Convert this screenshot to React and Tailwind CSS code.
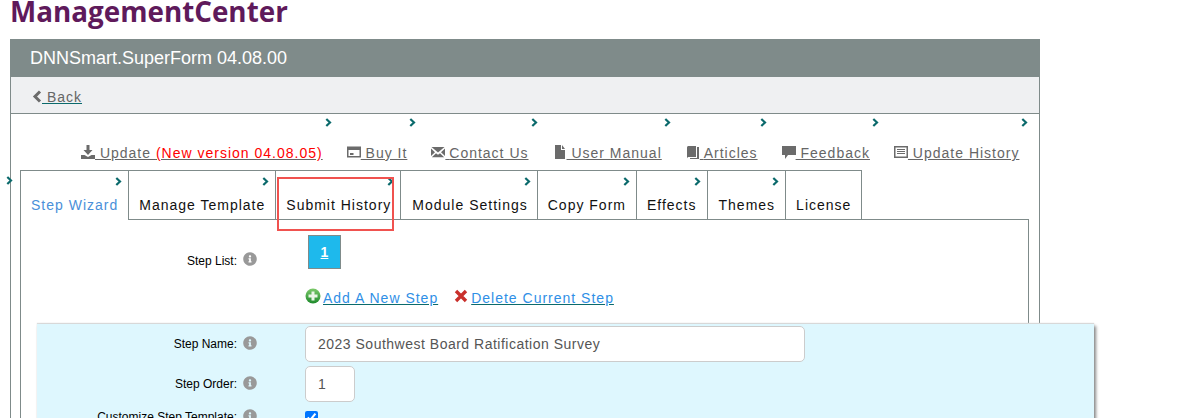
import { FaInfoCircle } from 'react-icons/fa';

// bootstrap style glyphs, all on a 14x14 box
const GLYPHS = {
  download: 'M5.5 0h3v5h3L7 10 2.5 5h3zM0 10h3.5L7 12l3.5-2H14v4H0z',
  card: 'M0 1.5h14v11H0zM1.5 5v6h11V5zM3 8h3.5v2H3z',
  envelope: 'M.5 2h13L7 7.5zM0 3.5l4 3.7L0 11zM14 3.5l-4 3.7 4 3.8zM.8 12.2 5 8.2l2 1.6 2-1.6 4.2 4z',
  file: 'M2 0h6v5h4v9H2zM9 0l3 4H9z',
  book: 'M1 2.5C1 1.2 2 1 3 1h7v11H3c-1 0-2 .5-2 1.5zM11 2h2v12H4v-1h7z',
  comment: 'M0 1h14v9H6l-3 4v-4H0z',
  list: 'M0 1h14v12H0zM1.5 2.5v9h11v-9zM3 4h8v1H3zM3 6h8v1H3zM3 8h8v1H3z',
};

const LINKS = [
  { glyph: 'download', label: ' Update ', extra: '(New version 04.08.05)' },
  { glyph: 'card', label: ' Buy It' },
  { glyph: 'envelope', label: 'Contact Us', tight: true },
  { glyph: 'file', label: ' User Manual' },
  { glyph: 'book', label: 'Articles', tight: true },
  { glyph: 'comment', label: ' Feedback' },
  { glyph: 'list', label: ' Update History' },
];

const TABS = [
  { label: 'Step Wizard', active: true, pad: 'pb-[5px] pl-[10px] pr-[10px]' },
  { label: 'Manage Template', pad: 'pb-[4px] pl-[10px] pr-[10px]' },
  { label: 'Submit History', marked: true, pad: 'pb-[4px] pl-[10px] pr-[9px]' },
  { label: 'Module Settings', pad: 'pb-[4px] pl-[11px] pr-[9px]' },
  { label: 'Copy Form', pad: 'pb-[4px] pl-[10px] pr-[10px]' },
  { label: 'Effects', pad: 'pb-[4px] pl-[10px] pr-[10px]' },
  { label: 'Themes', pad: 'pb-[4px] pl-[11px] pr-[10px]' },
  { label: 'License', plain: true, pad: 'pb-[4px] pl-[10px] pr-[10px]' },
];

function Chevron({ className }) {
  return (
    <svg viewBox="0 0 7 9" className={`absolute h-[9px] w-[7px] ${className}`}>
      <path d="M1.3 1 5 4.5 1.3 8" fill="none" stroke="#0b6a6c" strokeWidth="2.2" />
    </svg>
  );
}

function Glyph({ name }) {
  return (
    <svg viewBox="0 0 14 14" className="h-[14px] w-[14px] shrink-0 -translate-y-px">
      <path d={GLYPHS[name]} fill="#6b6b6b" fillRule="evenodd" />
    </svg>
  );
}

function FieldRow({ label, className = '', children }) {
  return (
    <div className={`flex items-center ${className}`}>
      <div className="flex w-[268px] items-center justify-end pr-[48px] text-xs text-black">
        <span>{label}</span>
        <FaInfoCircle className="ml-[6px] h-[14px] w-[14px] -translate-y-px text-[#999]" />
      </div>
      {children}
    </div>
  );
}

export default function App() {
  return (
    <div className="h-[418px] w-[1182px] overflow-hidden bg-white font-['Liberation_Sans',Arial,sans-serif]">
      <h1 className="h-[39px] pl-[10px] font-['Open_Sans',sans-serif] text-[27.8px] leading-[23px] font-bold text-[#5f1a5b]">
        ManagementCenter
      </h1>

      <div className="ml-[10px] w-[1030px]">
        <div className="flex h-[38px] items-center bg-[#7f8b8a] px-5 text-lg text-white">DNNSmart.SuperForm 04.08.00</div>

        <div className="flex h-[37px] items-center border-x border-b border-[#7f8b8a] bg-[#eff0f2] pt-[4px] pl-[21px] text-sm tracking-[1px] text-[#666]">
          <svg viewBox="0 0 10 13" className="h-[13px] w-[10px] -translate-y-px">
            <path d="M8 1.5 3 6.5l5 5" fill="none" stroke="#6b6b6b" strokeWidth="3" />
          </svg>
          <span className="whitespace-pre underline decoration-[#0b6a6c]"> Back</span>
        </div>

        <div className="h-[400px] border-x border-[#7f8b8a] pr-[10px] pl-[9px]">
          <ul className="flex h-[56px] items-end gap-[24px] pb-[7px] pl-[61px] text-sm tracking-[1px] text-[#666]">
            {LINKS.map(({ glyph, label, extra, tight }) => (
              <li key={label} className="relative flex items-center whitespace-pre">
                <Glyph name={glyph} />
                <span className="underline">
                  {tight && <span className="tracking-normal"> </span>}
                  {label}
                  {extra && <span className="text-[#f00]">{extra}</span>}
                </span>
                <Chevron className="top-[-25px] right-[-9px]" />
              </li>
            ))}
          </ul>

          <div className="relative">
            <Chevron className="top-[6px] left-[-14px]" />
            <ul className="relative z-10 flex h-[50px] text-sm tracking-[1px] text-[#111]">
              {TABS.map(({ label, active, marked, plain, pad }, i) => (
                <li
                  key={label}
                  className={`relative flex items-end border-t border-r border-[#7f8b8a] ${pad} ${i === 0 ? 'border-l' : ''} ${active ? 'bg-white text-[#4a90d9]' : 'border-b'}`}
                >
                  {label}
                  {!plain && <Chevron className="top-[6px] right-[6px]" />}
                  {marked && <div className="absolute top-[6px] left-px h-[54px] w-[117px] border-2 border-[#f0524f]" />}
                </li>
              ))}
            </ul>

            <div className="-mt-px h-[400px] border border-[#7f8b8a]">
              <div className="flex h-[51px] items-start pt-[15px]">
                <div className="flex h-[46px] w-[284px] items-center justify-end pt-[1px] pr-[48px] text-xs text-black">
                  <span className="translate-y-[2px]">Step List:</span>
                  <FaInfoCircle className="ml-[6px] h-[14px] w-[14px] text-[#999]" />
                </div>
                <div className="ml-[3px] flex h-[34px] w-[33px] items-center justify-center border border-[#7f8b8a] bg-[#1eb9ec] text-sm font-bold text-white underline">
                  1
                </div>
              </div>

              <div className="flex h-[53px] items-start pt-[17px] pl-[284px] text-sm tracking-[1px] text-[#2f8fe6]">
                <svg viewBox="0 0 16 16" className="mr-[2px] h-[16px] w-[16px]">
                  <defs>
                    <linearGradient id="plus-green" x1="0" y1="0" x2="0" y2="1">
                      <stop offset="0" stopColor="#7cc96a" />
                      <stop offset="1" stopColor="#1e8a2c" />
                    </linearGradient>
                  </defs>
                  <circle cx="8" cy="8" r="7.5" fill="url(#plus-green)" />
                  <path d="M6.5 3.5h3v3h3v3h-3v3h-3v-3h-3v-3h3z" fill="#eaf5e6" />
                </svg>
                <span className="underline decoration-[#0b6a6c]">Add A New Step</span>
                <svg viewBox="0 0 14 14" className="mt-[1px] mr-[3px] ml-[16px] h-[14px] w-[14px]">
                  <path d="M2 2l10 10M12 2 2 12" stroke="#c9302c" strokeWidth="3.4" />
                </svg>
                <span className="underline decoration-[#0b6a6c]">Delete Current Step</span>
              </div>

              <div className="ml-[16px] h-[200px] w-[1057px] bg-[#def7fe] pt-[2px] shadow-[2px_2px_3px_#888,0_-1px_1px_#ddd]">
                <FieldRow label="Step Name:" className="h-[36px]">
                  <div className="flex h-[36px] w-[500px] items-center rounded-[5px] border border-[#ccc] bg-white px-3 pb-px text-sm tracking-[0.5px] text-[#555]">
                    2023 Southwest Board Ratification Survey
                  </div>
                </FieldRow>
                <FieldRow label="Step Order:" className="mt-[4px] h-[36px]">
                  <div className="flex h-[36px] w-[50px] items-center rounded-[5px] border border-[#ccc] bg-white px-3 text-sm text-[#555]">
                    1
                  </div>
                </FieldRow>
                <FieldRow label="Customize Step Template:" className="mt-[5px] h-[20px]">
                  <input type="checkbox" defaultChecked className="h-[13px] w-[13px] accent-[#0075ff]" />
                </FieldRow>
              </div>
            </div>
          </div>
        </div>
      </div>
    </div>
  );
}
